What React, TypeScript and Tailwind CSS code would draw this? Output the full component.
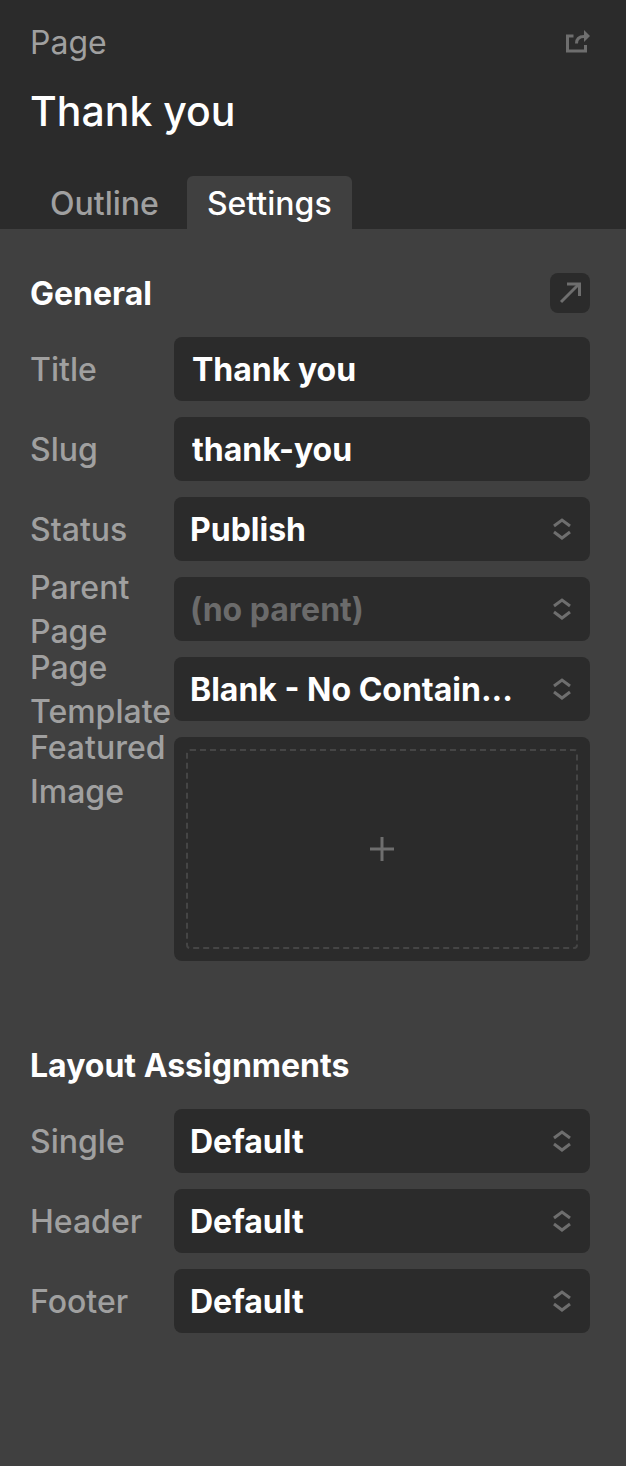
import { useState, type ReactNode } from "react"

interface FieldProps {
    id: string
    label: string
    children: ReactNode
}

function Field({ id, label, children }: FieldProps) {
    return (
        <div className="grid grid-cols-[144px_minmax(0,1fr)] items-start">
            {/* Two-line labels spill evenly above and below the row */}
            <label htmlFor={id} className="flex h-16 items-center pt-0.5 font-medium text-[#a0a0a0]">
                {label}
            </label>
            {children}
        </div>
    )
}

function TextField({ id, label, initial }: { id: string; label: string; initial: string }) {
    const [value, setValue] = useState(initial)

    return (
        <Field id={id} label={label}>
            <input
                id={id}
                type="text"
                value={value}
                onChange={(e) => setValue(e.target.value)}
                className="h-16 w-full rounded-lg bg-[#2b2b2b] px-[18px] font-bold text-white outline-none"
            />
        </Field>
    )
}

interface SelectFieldProps {
    id: string
    label: string
    options: string[]
    muted?: boolean
}

function SelectField({ id, label, options, muted }: SelectFieldProps) {
    return (
        <Field id={id} label={label}>
            <div className="relative">
                <select
                    id={id}
                    className={`h-16 w-full appearance-none truncate rounded-lg bg-[#2b2b2b] pt-0.5 pr-12 pl-4 font-bold outline-none ${
                        muted ? "text-[#6b6b6b]" : "text-white"
                    }`}
                >
                    {options.map((option) => (
                        <option key={option}>{option}</option>
                    ))}
                </select>
                <svg
                    viewBox="0 0 18 24"
                    className="pointer-events-none absolute top-5 right-[19px] h-6 w-[18px]"
                    fill="none"
                    stroke="#6e6e6e"
                    strokeWidth="3"
                    aria-hidden="true"
                >
                    <path d="M1 9 L9 3 L17 9" />
                    <path d="M1 15 L9 21 L17 15" />
                </svg>
            </div>
        </Field>
    )
}

export default function App() {
    const [tab, setTab] = useState("Settings")

    return (
        <div className="min-h-screen bg-[#404040] font-['Inter','Liberation_Sans',sans-serif] text-[32px] leading-[44px]">
            <header className="bg-[#2b2b2b] pt-[21px] pr-9 pl-[30px]">
                <div className="flex items-center justify-between">
                    <span className="text-[#a0a0a0]">Page</span>
                    <button type="button" aria-label="Open page">
                        <svg viewBox="0 0 24 26" className="h-[26px] w-6" fill="none" stroke="#6e6e6e" strokeWidth="3" aria-hidden="true">
                            <path d="M7.5 6 H1.5 V21 H19.5 V15" />
                            <path d="M10.5 13.5 C10.5 9 12.5 6.5 18 6.5" />
                            <path d="M18 0 L24 6 L18 12 Z" fill="#6e6e6e" stroke="none" />
                        </svg>
                    </button>
                </div>
                <h1 className="mt-4 text-[41px] leading-[60px] font-medium text-white">Thank you</h1>
                <div role="tablist" className="mt-[35px] flex gap-2">
                    {["Outline", "Settings"].map((name) => (
                        <button
                            key={name}
                            type="button"
                            role="tab"
                            aria-selected={tab === name}
                            onClick={() => setTab(name)}
                            className={`h-[53px] rounded-t-md px-5 pt-0.5 font-medium ${
                                tab === name ? "bg-[#404040] text-white" : "text-[#a0a0a0]"
                            }`}
                        >
                            {name}
                        </button>
                    ))}
                </div>
            </header>

            <main className="pt-[43px] pr-9 pb-12 pl-[30px]">
                <section>
                    <div className="flex items-start justify-between">
                        <h2 className="font-bold text-white">General</h2>
                        <button
                            type="button"
                            aria-label="Expand"
                            className="mt-px flex size-10 items-center justify-center rounded-lg bg-[#2b2b2b]"
                        >
                            <svg viewBox="0 0 40 40" className="size-10" fill="none" stroke="#6e6e6e" strokeWidth="3" aria-hidden="true">
                                <path d="M11 29 L29 11" />
                                <path d="M17 11 H29.5 V23" />
                            </svg>
                        </button>
                    </div>
                    <div className="mt-[21px] flex flex-col gap-4">
                        <TextField id="title" label="Title" initial="Thank you" />
                        <TextField id="slug" label="Slug" initial="thank-you" />
                        <SelectField id="status" label="Status" options={["Publish"]} />
                        <SelectField id="parent" label="Parent Page" options={["(no parent)"]} muted />
                        <SelectField id="template" label="Page Template" options={["Blank - No Contain..."]} />
                        <Field id="image" label="Featured Image">
                            <button id="image" type="button" className="h-56 w-full rounded-lg bg-[#2b2b2b] p-3">
                                <span className="flex h-full items-center justify-center rounded border-2 border-dashed border-[#454545]">
                                    <svg viewBox="0 0 24 24" className="size-6" stroke="#6e6e6e" strokeWidth="3" aria-hidden="true">
                                        <path d="M12 0 V24 M0 12 H24" />
                                    </svg>
                                </span>
                            </button>
                        </Field>
                    </div>
                </section>

                <section className="mt-[83px]">
                    <h2 className="font-bold text-white">Layout Assignments</h2>
                    <div className="mt-[21px] flex flex-col gap-4">
                        <SelectField id="single" label="Single" options={["Default"]} />
                        <SelectField id="header" label="Header" options={["Default"]} />
                        <SelectField id="footer" label="Footer" options={["Default"]} />
                    </div>
                </section>
            </main>
        </div>
    )
}
